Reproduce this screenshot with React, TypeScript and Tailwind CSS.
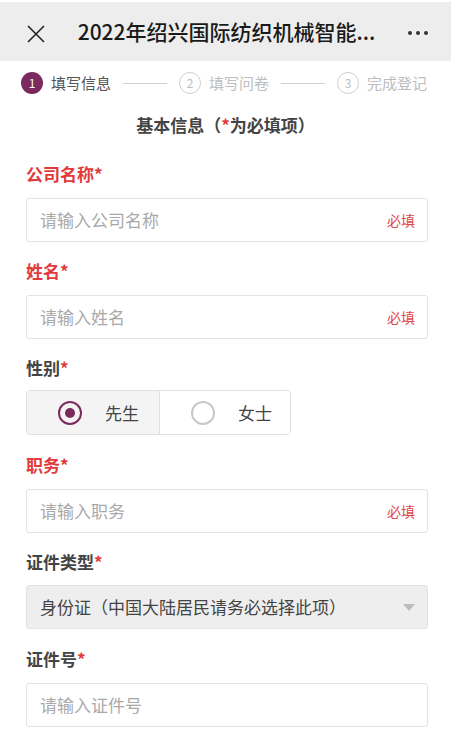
import React from "react";

const font = {
  fontFamily: '"Noto Sans CJK SC", "Noto Sans", sans-serif',
};

const Label = ({ text, red }: { text: string; red?: boolean }) => (
  <div
    className={`h-[24px] flex items-center text-[17px] font-semibold leading-none ${
      red ? "text-[#e2393b]" : "text-[#444]"
    }`}
  >
    {text}
    <span className="text-[#e2393b]">*</span>
  </div>
);

const TextInput = ({ placeholder, required }: { placeholder: string; required?: boolean }) => (
  <div className="mt-[13px] h-[44px] rounded-[3px] border border-[#e3e3e3] bg-white flex items-center justify-between pl-[13px] pr-[12px]">
    <span className="text-[17px] text-[#a9a9a9]">{placeholder}</span>
    {required && <span className="text-[14px] text-[#e0474c]">必填</span>}
  </div>
);

const Step = ({ n, label, active }: { n: number; label: string; active?: boolean }) => (
  <div className="flex items-center gap-[8px]">
    <div
      className={`w-[22px] h-[22px] rounded-full flex items-center justify-center text-[12px] leading-none ${
        active ? "bg-[#7b2a5e] text-white" : "border border-[#cfcfcf] text-[#bdbdbd]"
      }`}
    >
      {n}
    </div>
    <span className={`text-[15px] ${active ? "text-[#555]" : "text-[#bdbdbd]"}`}>{label}</span>
  </div>
);

export default function App() {
  return (
    <div className="w-[451px] min-h-[732px] bg-white pt-[2px]" style={font}>
      {/* header */}
      <div className="h-[59px] bg-[#ededed] flex items-center relative">
        <svg
          className="absolute left-[27px] top-[23px]"
          width="18"
          height="18"
          viewBox="0 0 18 18"
          fill="none"
          stroke="#222"
          strokeWidth="1.6"
        >
          <path d="M1 1L17 17M17 1L1 17" />
        </svg>
        <div className="mx-auto pl-[2px] whitespace-nowrap text-[21px] font-medium text-[#1a1a1a]">
          2022年绍兴国际纺织机械智能...
        </div>
        <div className="absolute right-[23px] top-[29px] flex gap-[4px]">
          <span className="w-[4px] h-[4px] rounded-full bg-[#333]" />
          <span className="w-[4px] h-[4px] rounded-full bg-[#333]" />
          <span className="w-[4px] h-[4px] rounded-full bg-[#333]" />
        </div>
      </div>

      {/* steps */}
      <div className="mt-[11px] h-[22px] pl-[21px] pr-[24px] flex items-center">
        <Step n={1} label="填写信息" active />
        <div className="mx-[12px] flex-1 h-px bg-[#d0d0d0]" />
        <Step n={2} label="填写问卷" />
        <div className="mx-[12px] flex-1 h-px bg-[#d0d0d0]" />
        <Step n={3} label="完成登记" />
      </div>

      <div className="mt-[19px] h-[24px] flex items-center justify-center text-[17px] font-semibold text-[#444]">
        基本信息（<span className="text-[#e2393b]">*</span>为必填项）
      </div>

      <div className="mt-[24px] pl-[26px] pr-[23px]">
        <Label text="公司名称" red />
        <TextInput placeholder="请输入公司名称" required />

        <div className="mt-[16px]">
          <Label text="姓名" red />
          <TextInput placeholder="请输入姓名" required />
        </div>

        <div className="mt-[16px]">
          <Label text="性别" />
          <div className="mt-[11px] w-[265px] h-[45px] rounded-[4px] border border-[#e0e0e0] flex overflow-hidden">
            <div className="w-[133px] bg-[#f4f4f4] border-r border-[#e0e0e0] flex items-center pl-[31px]">
              <div className="w-[24px] h-[24px] rounded-full border-2 border-[#7b2a5e] flex items-center justify-center">
                <div className="w-[10px] h-[10px] rounded-full bg-[#7b2a5e]" />
              </div>
              <span className="ml-[23px] text-[17px] text-[#444]">先生</span>
            </div>
            <div className="flex-1 bg-white flex items-center pl-[31px]">
              <div className="w-[24px] h-[24px] rounded-full border-2 border-[#c8c8c8]" />
              <span className="ml-[23px] text-[17px] text-[#444]">女士</span>
            </div>
          </div>
        </div>

        <div className="mt-[17px]">
          <Label text="职务" red />
          <TextInput placeholder="请输入职务" required />
        </div>

        <div className="mt-[16px]">
          <Label text="证件类型" />
          <div className="mt-[12px] h-[44px] rounded-[3px] border border-[#e3e3e3] bg-[#eeeeee] flex items-center justify-between pl-[13px] pr-[12px]">
            <span className="text-[17px] text-[#444]">身份证（中国大陆居民请务必选择此项）</span>
            <svg width="12" height="7" viewBox="0 0 12 7">
              <path d="M0 0H12L6 7Z" fill="#bdbdbd" />
            </svg>
          </div>
        </div>

        <div className="mt-[17px]">
          <Label text="证件号" />
          <TextInput placeholder="请输入证件号" />
        </div>
      </div>
    </div>
  );
}
